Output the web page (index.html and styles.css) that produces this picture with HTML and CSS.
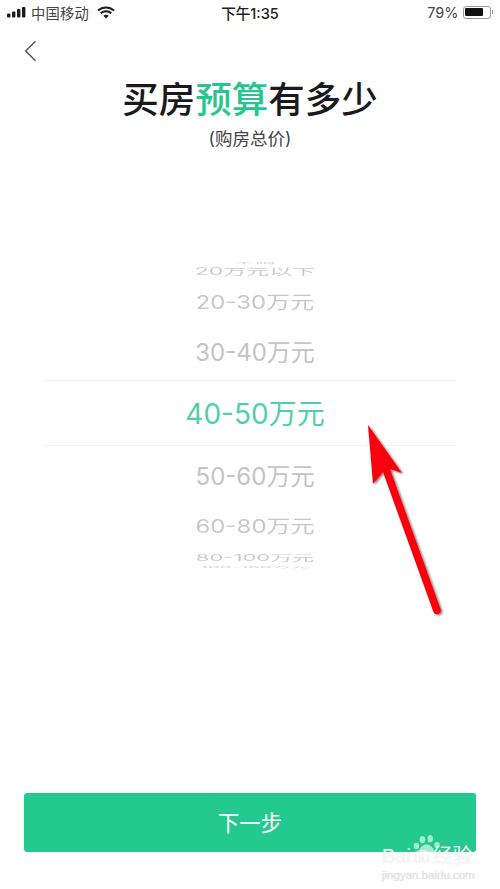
FILE: index.html
```html
<!DOCTYPE html>
<html lang="zh-CN">
<head>
<meta charset="utf-8">
<title>买房预算有多少</title>
<link rel="stylesheet" href="styles.css">
</head>
<body>
<div class="screen">
  <header class="status">
    <div class="status-left">
      <svg class="signal" viewBox="0 0 20 11" width="20" height="11"><rect x="0" y="6.500" width="3.400" height="4" rx="1"/><rect x="5" y="4.500" width="3.400" height="6" rx="1"/><rect x="10" y="2" width="3.400" height="8.500" rx="1"/><rect x="15" y="0" width="3.400" height="10.500" rx="1"/></svg>
      <span class="carrier">中国移动</span>
      <svg class="wifi" viewBox="0 0 18 13" width="18" height="13"><path d="M1 4.600C5.600 .4 12.400 .4 17 4.600M3.700 7.300C6.700 4.600 11.300 4.600 14.300 7.300" fill="none" stroke="#1c1c1c" stroke-width="2"/><path d="M6.300 9.800C7.900 8.500 10.100 8.500 11.700 9.800L9 12.600Z" fill="#1c1c1c"/></svg>
    </div>
    <div class="status-time">下午1:35</div>
    <div class="status-right">
      <span>79%</span>
      <span class="battery"><span class="battery-fill"></span></span>
      <span class="battery-cap"></span>
    </div>
  </header>

  <div class="nav">
    <svg class="back" viewBox="0 0 13 22" width="13" height="22"><path d="M11.500 1.200L1.700 11L11.500 20.800" fill="none" stroke="#555" stroke-width="1.500"/></svg>
  </div>

  <h1 class="title">买房<em class="accent">预算</em>有多少</h1>
  <p class="subtitle">(购房总价)</p>

  <section class="picker">
    <div class="row row-frag-top"><span class="label l0">不限</span></div>
    <div class="row row-edge-top"><span class="label l1"><span class="num">20</span>万元以下</span></div>
    <div class="row row-a"><span class="label l2"><span class="num">20-30</span>万元</span></div>
    <div class="row row-b"><span class="label l3"><span class="num">30-40</span>万元</span></div>
    <div class="row row-selected"><span class="label selected"><span class="num">40-50</span>万元</span></div>
    <div class="row row-c"><span class="label l3"><span class="num">50-60</span>万元</span></div>
    <div class="row row-d"><span class="label l2"><span class="num">60-80</span>万元</span></div>
    <div class="row row-edge-bottom"><span class="label l1b"><span class="num">80-100</span>万元</span></div>
    <div class="row row-frag-bottom"><span class="label l0b"><span class="num">100-150</span>万元</span></div>
  </section>

  <div class="spacer"></div>

  <footer class="footer">
    <button class="next" type="button">下一步</button>
  </footer>

  <svg class="arrow" viewBox="0 0 90 200" width="90" height="200">
    <defs><filter id="s" x="-20%" y="-20%" width="140%" height="140%"><feDropShadow dx="1.500" dy="1" stdDeviation="1.200" flood-color="#000" flood-opacity=".55"/></filter></defs>
    <g filter="url(#s)" fill="#fa0610">
      <path d="M6 5L40 53L28 49L78.500 189A3.600 3.600 0 0 1 71.500 192L21 52L11 64Z"/>
    </g>
  </svg>

  <div class="watermark">
    <svg class="paw" viewBox="0 0 30 24" width="28" height="22"><g fill="#fff" fill-opacity=".6"><ellipse cx="10" cy="5" rx="3" ry="4"/><ellipse cx="18.500" cy="4" rx="3" ry="4"/><ellipse cx="26" cy="11" rx="3" ry="3.500"/><ellipse cx="3.500" cy="12" rx="3" ry="3.500"/><path d="M14.500 10C19 10 25 17 23 22C18 24 10 24 6 22C4 17 10 10 14.500 10Z"/></g></svg>
    <div class="wm-main">Bai<span class="wm-du">du</span>经验</div>
    <div class="wm-url">jingyan.baidu.com</div>
  </div>
</div>
</body>
</html>
```

FILE: styles.css
```css
* { box-sizing: border-box; }
html, body { margin: 0; padding: 0; background: #fff; }
body { font-family: "Inter", "Noto Sans CJK SC", sans-serif; }

.screen {
  position: relative;
  width: 500px;
  height: 889px;
  overflow: hidden;
  display: flex;
  flex-direction: column;
  background: #fff;
  color: #1d1d1f;
}

.status {
  height: 24px;
  padding: 0 7px;
  display: grid;
  grid-template-columns: 1fr auto 1fr;
  align-items: center;
  font-size: 14.500px;
  color: #333;
}
.status-left { display: flex; align-items: center; }
.signal { fill: #1c1c1c; margin-right: 4px; }
.carrier { font-size: 14.300px; letter-spacing: .2px; color: #444; }
.wifi { margin-left: 8px; }
.status-time { font-size: 14.500px; font-weight: 500; color: #222; }
.status-right { display: flex; align-items: center; justify-content: flex-end; color: #444; }
.battery {
  margin-left: 4px;
  width: 28px;
  height: 13px;
  border: 1px solid #999;
  border-radius: 3px;
  padding: 1.500px;
  display: flex;
}
.battery-fill { width: 79%; background: #111; border-radius: 1px; }
.battery-cap { width: 1.500px; height: 4px; background: #999; margin-left: 1px; }

.nav { height: 40px; padding: 16px 0 0 24px; }
.back { display: block; }

.title {
  margin: 14px 0 0;
  text-align: center;
  font-size: 36.500px;
  line-height: 44px;
  font-weight: 500;
  color: #1a1a1c;
}
.accent { font-style: normal; color: #27c68f; }

.subtitle {
  margin: 5px 0 0;
  text-align: center;
  font-size: 17.500px;
  line-height: 24px;
  color: #444;
}

.picker {
  margin-top: 111px;
  height: 308px;
  display: flex;
  flex-direction: column;
  align-items: center;
  color: #c4c4c4;
}
.row { width: 100%; flex: none; display: flex; justify-content: center; align-items: center; }
.label { display: block; white-space: nowrap; line-height: 1; margin-left: 10px; }

.row-frag-top { height: 3px; }
.row-edge-top { height: 12px; margin-top: 0; }
.row-a { height: 28px; margin-top: 12px; }
.row-b { height: 32px; margin-top: 20px; }
.row-selected {
  width: 412px;
  height: 66px;
  margin-top: 11px;
  padding-top: 1px;
  border-top: 1px solid #f3f3f3;
  border-bottom: 1px solid #f3f3f3;
}
.row-c { height: 32px; margin-top: 15px; }
.row-d { height: 28px; margin-top: 20px; }
.row-edge-bottom { height: 12px; margin-top: 11px; }
.row-frag-bottom { height: 3px; margin-top: 2px; }

.l0 { font-size: 21px; transform: scaleY(.1); color: #d4d4d4; }
.l0b { font-size: 19px; transform: scaleY(.1); color: #d4d4d4; }
.l1 { font-size: 23px; transform: scaleY(.42); color: #cbcbcb; }
.l1b { font-size: 22px; transform: scaleY(.38); color: #cbcbcb; }
.l2 { font-size: 24px; transform: scaleY(.75); color: #c8c8c8; }
.l3 { font-size: 24px; color: #c4c4c4; }
.selected { font-size: 28px; color: #4fd0a6; }

.spacer { flex: 1; }

.footer { padding: 0 24px 37px; }
.next {
  display: block;
  width: 100%;
  height: 59px;
  padding: 0 0 3px;
  border: 0;
  border-radius: 3px;
  background: #24c98f;
  color: #fff;
  font-family: inherit;
  font-size: 21.500px;
}

.arrow { position: absolute; left: 362px; top: 420px; }

.watermark {
  position: absolute;
  left: 382px;
  top: 835px;
  width: 118px;
  font-family: "Liberation Sans", "Noto Sans CJK SC", sans-serif;
  color: rgba(255,255,255,.8);
  text-shadow: 0 0 1px rgba(205,205,205,.8);
}
.paw { position: absolute; left: 31px; top: 0; }
.wm-main { margin-top: 10px; font-size: 20px; line-height: 22px; white-space: nowrap; }
.wm-du { font-size: 14px; padding: 0 2px; margin: 0 1px; border-radius: 8px; background: rgba(255,255,255,.5); }
.wm-url { font-size: 11.500px; line-height: 12px; white-space: nowrap; color: #e6e6e6; }
```
